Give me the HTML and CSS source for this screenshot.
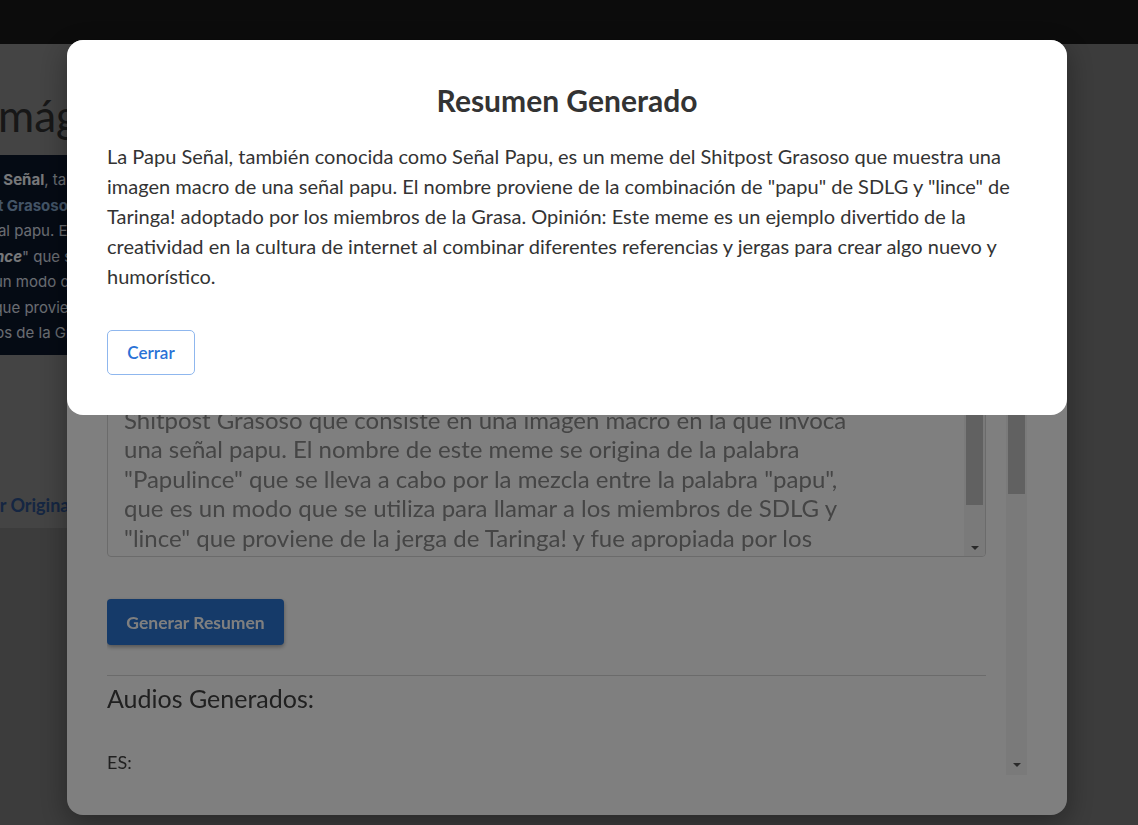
FILE: index.html
```html
<!DOCTYPE html>
<html lang="es">
<head>
<meta charset="utf-8">
<title>Resumen Generado</title>
<link rel="stylesheet" href="styles.css">
</head>
<body>
<div class="page">
  <header class="topbar"></header>
  <main class="card">
    <h1 class="page-title">Imágenes</h1>
    <div class="desc-box">
      <div><b>La Papu Señal</b>, también conocida como Señal Papu</div>
      <div><b class="hl">Shitpost Grasoso</b> que consiste en una imagen</div>
      <div>una señal papu. El nombre de este meme</div>
      <div>"<b><i>Papulince</i></b>" que se lleva a cabo por la mezcla</div>
      <div>que es un modo que se utiliza para llamar</div>
      <div>"lince" que proviene de la jerga de Taringa!</div>
      <div>miembros de la Grasa.</div>
    </div>
    <a class="view-link" href="#">Ver Original</a>
  </main>
</div>

<div class="dialog dialog-edit">
  <div class="edit-scroll">
    <div class="edit-content">
      <p class="field-label">Descripción:</p>
      <div class="textarea">
        <div class="textarea-text">La Papu Señal, también conocida como Señal Papu, es un meme<br>originado en el foro Shitposting Del Lado Gris (SDLG) que se<br>popularizó entre los usuarios de distintas comunidades<br>a mediados de la década pasada. Consiste en una imagen<br>que fue compartida miles de veces en diferentes versiones<br>y formatos. Con el tiempo, el meme se convirtió en un<br>símbolo de la comunidad y en uno de los contenidos más<br>representativos del humor absurdo. La Papu Señal es un<br>meme propio del grupo y uno de los más recordados del<br>Shitpost Grasoso que consiste en una imagen macro en la que invoca<br>una señal papu. El nombre de este meme se origina de la palabra<br>"Papulince" que se lleva a cabo por la mezcla entre la palabra "papu",<br>que es un modo que se utiliza para llamar a los miembros de SDLG y<br>"lince" que proviene de la jerga de Taringa! y fue apropiada por los<br>miembros de la Grasa.</div>
        <div class="sb sb-textarea">
          <div class="sb-btn up"></div>
          <div class="sb-thumb"></div>
          <div class="sb-rest"></div>
          <div class="sb-btn down"></div>
        </div>
      </div>
      <button class="btn-primary" type="button">Generar Resumen</button>
      <hr class="divider">
      <h3 class="audio-title">Audios Generados:</h3>
      <p class="audio-lang">ES:</p>
    </div>
    <div class="sb sb-dialog">
      <div class="sb-btn up"></div>
      <div class="sb-thumb"></div>
      <div class="sb-rest"></div>
      <div class="sb-btn down"></div>
    </div>
  </div>
</div>

<div class="backdrop"></div>

<div class="dialog dialog-summary">
  <h2 class="summary-title">Resumen Generado</h2>
  <p class="summary-text">La Papu Señal, también conocida como Señal Papu, es un meme del Shitpost Grasoso que muestra una imagen macro de una señal papu. El nombre proviene de la combinación de "papu" de SDLG y "lince" de Taringa! adoptado por los miembros de la Grasa. Opinión: Este meme es un ejemplo divertido de la creatividad en la cultura de internet al combinar diferentes referencias y jergas para crear algo nuevo y humorístico.</p>
  <button class="btn-outline" type="button">Cerrar</button>
</div>
</body>
</html>
```

FILE: styles.css
```css
* { box-sizing: border-box; }

html, body {
  margin: 0;
  height: 100%;
}

body {
  background: #787878;
  font-family: Lato, "Noto Sans", sans-serif;
  overflow: hidden;
}

/* ---------- page behind the dialogs ---------- */
.topbar {
  height: 44px;
  background: #181818;
}

.card {
  width: 560px;
  height: 484px;
  margin-left: -90px;
  padding: 45px 20px 0;
  background: #888888;
}

.page-title {
  margin: 0 0 14px;
  padding-left: 56px;
  font-size: 44px;
  line-height: 52px;
  font-weight: 400;
  color: #2e2e2e;
}

.desc-box {
  height: 200px;
  padding: 12px 12px 10px;
  background: #0b1629;
  font-family: Inter, "Noto Sans", sans-serif;
  font-size: 15px;
  line-height: 25.5px;
  color: #d4dae2;
  white-space: nowrap;
  overflow: hidden;
}

.desc-box b { color: #eef1f5; font-weight: 700; }
.desc-box .hl { color: #86a8cc; }

.view-link {
  display: block;
  margin: 138px 0 0 49px;
  font-size: 18px;
  line-height: 24px;
  font-weight: 700;
  color: #2a4c84;
  text-decoration: none;
}

/* ---------- dialogs ---------- */
.dialog {
  position: fixed;
  left: 67px;
  top: 40px;
  width: 1000px;
  padding: 40px;
  background: #ffffff;
  border-radius: 16px;
}

.dialog-edit {
  height: 775px;
  display: flex;
  box-shadow: 0 8px 28px rgba(0, 0, 0, 0.35);
}

.backdrop {
  position: fixed;
  inset: 0;
  background: rgba(0, 0, 0, 0.5);
}

.edit-scroll {
  flex: 1;
  display: flex;
  min-height: 0;
}

.edit-content {
  flex: 1;
  padding-right: 20px;
  overflow: hidden;
}

.field-label {
  margin: 0 0 20px;
  font-size: 20px;
  line-height: 28px;
  color: #444444;
}

.textarea {
  height: 429px;
  display: flex;
  border: 1px solid #d6d6d6;
  border-radius: 4px;
  overflow: hidden;
}

.textarea-text {
  flex: 1;
  padding: 10px 16px;
  font-size: 24px;
  line-height: 29.5px;
  color: #8a8a8a;
  white-space: nowrap;
  overflow: hidden;
}

/* scrollbars */
.sb {
  width: 21px;
  display: flex;
  flex-direction: column;
  background: #f5f5f5;
}

.sb-btn {
  height: 17px;
  display: flex;
  align-items: center;
  justify-content: center;
}

.sb-btn::after {
  content: "";
  border-left: 4px solid transparent;
  border-right: 4px solid transparent;
}

.sb-btn.up::after { border-bottom: 4px solid #555555; }
.sb-btn.down::after { border-top: 4px solid #555555; }

.sb-thumb {
  margin: 0 2px;
  background: #c3c3c3;
}

.sb-rest { flex: 1; }

.sb-textarea .sb-thumb { height: 359px; }

.sb-dialog .sb-thumb { height: 397px; }
.sb-dialog .sb-btn.down { height: 20px; }

.btn-primary {
  display: block;
  margin-top: 42px;
  width: 177px;
  height: 46px;
  border: 0;
  border-radius: 4px;
  background: #2a74d2;
  color: #ffffff;
  font-family: Lato, "Noto Sans", sans-serif;
  font-size: 17.5px;
  font-weight: 700;
  box-shadow: 0 2px 4px rgba(0, 0, 0, 0.35);
}

.divider {
  margin: 30px 0 0;
  border: 0;
  border-top: 1px solid #d6d6d6;
}

.audio-title {
  margin: 7px 0 0;
  font-size: 25px;
  line-height: 30px;
  font-weight: 400;
  color: #404040;
}

.audio-lang {
  margin: 37px 0 0;
  font-size: 18px;
  line-height: 24px;
  color: #404040;
}

/* summary dialog */
.summary-title {
  margin: 0;
  text-align: center;
  font-size: 30px;
  line-height: 40px;
  font-weight: 700;
  color: #333333;
}

.summary-text {
  margin: 21px 0 0;
  font-size: 20px;
  line-height: 30px;
  color: #333333;
}

.btn-outline {
  display: block;
  margin-top: 39px;
  width: 88px;
  height: 45px;
  border: 1px solid #8fb7ee;
  border-radius: 5px;
  background: #ffffff;
  color: #2a72d6;
  font-family: Lato, "Noto Sans", sans-serif;
  font-size: 17px;
  font-weight: 600;
}
```
